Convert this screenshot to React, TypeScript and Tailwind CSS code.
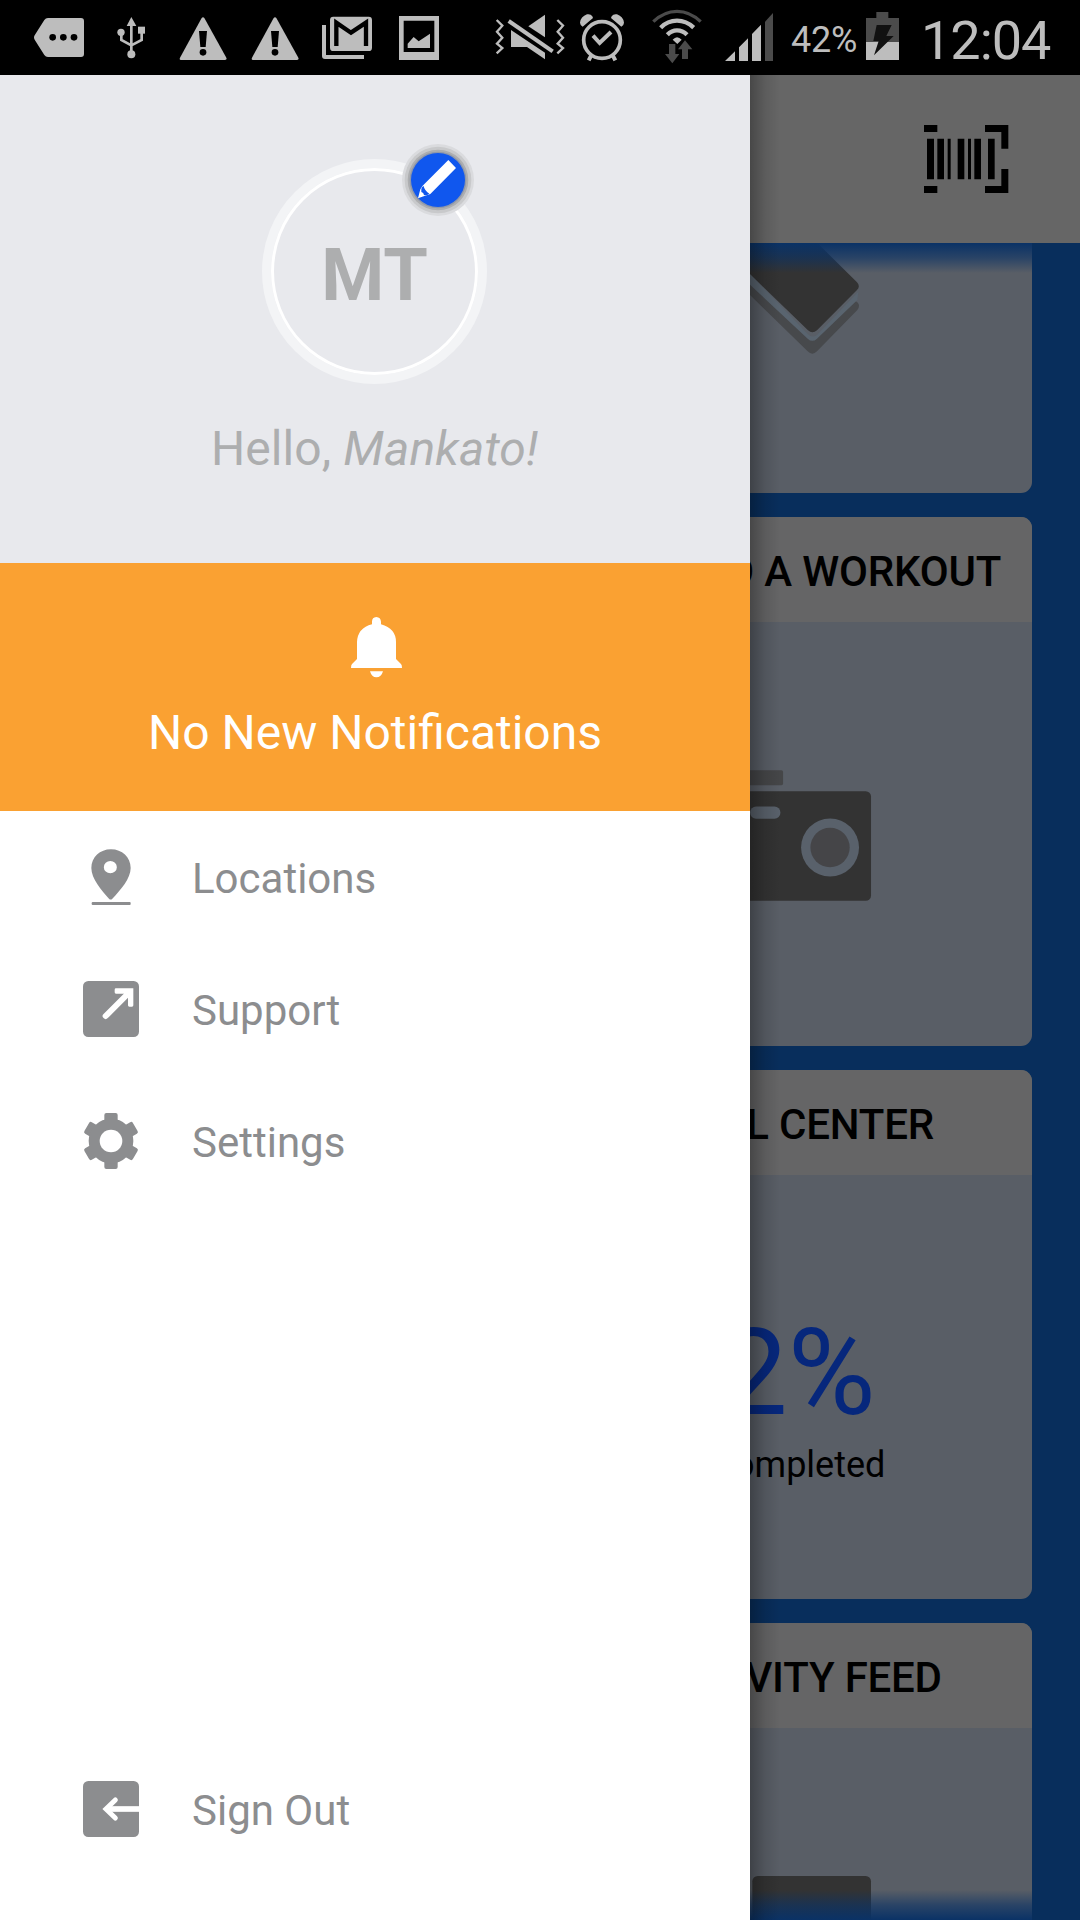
import { clsx } from 'clsx';

interface IconProps {
  className?: string;
}

function MoreIcon({ className }: IconProps) {
  return (
    <svg viewBox="102 0 150 225" className={className} fill="currentColor">
      <path d="M144 54H243Q252 54 252 63V162Q252 171 243 171H144Q137 171 133 165L104 119Q100 112 104 106L133 60Q137 54 144 54Z" />
      <g className="fill-black">
        <circle cx="158" cy="112" r="10" />
        <circle cx="190" cy="112" r="10" />
        <circle cx="222" cy="112" r="10" />
      </g>
    </svg>
  );
}

function UsbIcon({ className }: IconProps) {
  return (
    <svg viewBox="351 0 87 225" className={className} fill="currentColor">
      <path d="M394 51L409 78H380Z" />
      <circle cx="363" cy="97" r="11" />
      <circle cx="394" cy="163" r="12" />
      <path d="M414 80H435V101H414Z" />
      <path d="M394 70V160M364 97V120L394 136M425 98V120L394 136" fill="none" stroke="currentColor" strokeWidth="8" />
    </svg>
  );
}

function WarningIcon({ className }: IconProps) {
  return (
    <svg viewBox="537 0 144 225" className={className} fill="currentColor">
      <path d="M605 54Q609 49 613 54L679 173Q682 180 675 180H543Q537 180 540 173Z" />
      <path d="M597 93H621L617 141H601Z" className="fill-black" />
      <circle cx="609" cy="157" r="10" className="fill-black" />
    </svg>
  );
}

function MailIcon({ className }: IconProps) {
  return (
    <svg viewBox="963 0 156 225" className={className} fill="currentColor">
      <path d="M966 75H978V165H1092V177H975Q966 177 966 168Z" />
      <rect x="990" y="50" width="126" height="103" rx="10" />
      <path d="M1009 138V68L1053 98L1098 68V138" fill="none" stroke="black" strokeWidth="13" />
    </svg>
  );
}

function PictureIcon({ className }: IconProps) {
  return (
    <svg viewBox="1197 0 120 225" className={className} fill="currentColor">
      <path fillRule="evenodd" d="M1197 48H1317V180H1197ZM1211 62V156H1303V62Z" />
      <path d="M1223 144V131L1241 111L1256 124L1290 101V144Z" />
    </svg>
  );
}

function MuteIcon({ className }: IconProps) {
  return (
    <svg viewBox="105 0 210 225" className={className} fill="currentColor">
      <path d="M110 60L127 77L111 95L127 113L111 131L127 144L110 160M292 60L309 77L293 95L309 113L293 131L309 144L292 160" fill="none" stroke="currentColor" strokeWidth="7" />
      <path d="M255 44V112L205 79Z" />
      <path d="M153 90L255 158V178L201 141H153Z" />
      <path d="M146 63L278 154" stroke="currentColor" strokeWidth="12" />
    </svg>
  );
}

function AlarmIcon({ className }: IconProps) {
  return (
    <svg viewBox="357 0 138 225" className={className} fill="none" stroke="currentColor">
      <circle cx="426" cy="120" r="55" strokeWidth="11" />
      <path d="M399 107L419 129L453 96" strokeWidth="12" />
      <path d="M395 164L386 181M457 164L466 181" strokeWidth="12" />
      <path d="M360 68Q362 50 381 43Q392 41 397 49L399 54L368 80Q361 78 360 68ZM492 68Q490 50 471 43Q460 41 455 49L453 54L484 80Q491 78 492 68Z" fill="currentColor" stroke="none" />
    </svg>
  );
}

function WifiIcon({ className }: IconProps) {
  return (
    <svg viewBox="576 0 150 225" className={className} fill="none" stroke="currentColor" strokeWidth="13">
      <path d="M580 65Q612 34 651 34Q690 34 722 65" className="stroke-[#4b4b4b]" strokeWidth="10" />
      <path d="M602 83Q623 62 651 62Q679 62 701 83" />
      <path d="M622 104Q635 91 651 91Q668 91 681 104" />
      <path d="M638 119Q651 104 665 119L652 132Z" fill="currentColor" stroke="none" />
      <path d="M627 132H646V162H658L637 190L615 162H627ZM675 121L697 148H684V177H666V148H654Z" className="fill-[#4b4b4b]" stroke="none" />
    </svg>
  );
}

function SignalIcon({ className }: IconProps) {
  return (
    <svg viewBox="795 0 147 225" className={className} fill="currentColor">
      <path d="M795 183L825 154V183ZM837 142L864 115V183H837ZM876 102L903 74V183H876Z" />
      <path d="M915 65L939 39V183H915Z" className="fill-[#4b4b4b]" />
    </svg>
  );
}

function BatteryIcon({ className }: IconProps) {
  return (
    <svg viewBox="318 0 99 225" className={className}>
      <path d="M349 36H385V54H417V126H318V54H349Z" className="fill-[#4b4b4b]" />
      <path d="M318 126H417V180H318Z" fill="currentColor" />
      <path d="M350 75H395L379 108H401L342 166L356 123H340Z" className="fill-[#111]" />
    </svg>
  );
}

function StatusBar() {
  return (
    <header className="flex h-[75px] w-full shrink-0 items-center bg-black text-[#bdbdbd]">
      <MoreIcon className="ml-[34px] h-[75px] w-[50px] shrink-0" />
      <UsbIcon className="ml-[33px] h-[75px] w-[29px] shrink-0" />
      <WarningIcon className="ml-[33px] h-[75px] w-[48px] shrink-0" />
      <WarningIcon className="ml-[24px] h-[75px] w-[48px] shrink-0" />
      <MailIcon className="ml-[22px] h-[75px] w-[52px] shrink-0" />
      <PictureIcon className="ml-[26px] h-[75px] w-[40px] shrink-0" />
      <MuteIcon className="ml-[56px] h-[75px] w-[70px] shrink-0" />
      <AlarmIcon className="ml-[14px] h-[75px] w-[46px] shrink-0" />
      <WifiIcon className="ml-[27px] h-[75px] w-[50px] shrink-0" />
      <SignalIcon className="ml-[23px] h-[75px] w-[49px] shrink-0" />
      <span className="ml-[17px] w-[75px] pt-[5px] text-[36px] leading-none tracking-[-0.2px] whitespace-nowrap">42%</span>
      <BatteryIcon className="h-[75px] w-[33px] shrink-0" />
      <span className="ml-[22px] pt-[7px] text-[54px] leading-none tracking-[-1px] whitespace-nowrap">12:04</span>
    </header>
  );
}

function BarcodeIcon({ className }: IconProps) {
  return (
    <svg viewBox="552 165 255 204" className={className}>
      <path d="M552 165H592V186H552ZM552 348H592V369H552ZM735 165H805V236H784V186H735ZM784 297H805V369H735V348H784Z" />
      <path d="M561 206H582V328H561ZM592 206H612V328H592ZM623 206H632V328H623ZM653 206H673V328H653ZM684 206H693V328H684ZM703 206H723V328H703ZM744 206H764V328H744Z" />
    </svg>
  );
}

function PinIcon() {
  return (
    <svg viewBox="69 56 168 168" className="size-[56px]" fill="currentColor">
      <path fillRule="evenodd" d="M153 57C186 57 212 81 212 113C212 145 181 180 157 205Q152 210 147 205C125 181 94 145 94 113C94 81 120 57 153 57ZM151 92A19 18 0 1 0 151 129A19 18 0 1 0 151 92Z" />
      <rect x="95" y="215" width="117" height="9" rx="3" />
    </svg>
  );
}

function ExternalIcon() {
  return (
    <svg viewBox="69 453 168 168" className="size-[56px]">
      <rect x="69" y="453" width="168" height="168" rx="16" fill="currentColor" />
      <path d="M137 558L206 489" stroke="white" strokeWidth="18" strokeLinecap="round" />
      <path d="M168 475H220V526Q220 530 216 530H208Q204 530 204 526V503L192 491H168Q164 491 164 487V479Q164 475 168 475Z" fill="white" />
    </svg>
  );
}

function GearIcon() {
  return (
    <svg viewBox="69 849 168 168" className="size-[56px]" fill="currentColor">
      {[0, 60, 120].map((angle) => (
        <rect key={angle} x="133" y="849" width="40" height="168" rx="6" transform={`rotate(${angle} 153 933)`} />
      ))}
      <circle cx="153" cy="933" r="67" />
      <circle cx="153" cy="933" r="34" fill="white" />
    </svg>
  );
}

function SignOutIcon() {
  return (
    <svg viewBox="69 63 168 168" className="size-[56px]">
      <rect x="69" y="63" width="168" height="168" rx="16" fill="currentColor" />
      <path d="M146 147H237" stroke="white" strokeWidth="17" />
      <path d="M166 120L138 147L166 174" fill="none" stroke="white" strokeWidth="15" strokeLinecap="round" />
    </svg>
  );
}

function BellIcon() {
  return (
    <svg viewBox="633 200 153 183" className="ml-[3px] h-[61px] w-[51px]" fill="white">
      <path d="M709 200Q722 201 723 214V222Q768 235 768 275V326L783 341Q786 344 786 353H633Q633 344 636 341L651 326V275Q653 233 696 222V214Q696 201 709 200ZM690 363H729Q724 381 709 381Q695 381 690 363Z" />
    </svg>
  );
}

function EditBadge() {
  return (
    <svg viewBox="486 42 216 216" className="absolute -top-[24px] left-[131px] size-[72px]">
      <circle cx="594" cy="150" r="108" className="fill-[#dadbde]" />
      <circle cx="594" cy="150" r="100" className="fill-[#c8c9cb]" />
      <circle cx="594" cy="150" r="91" className="fill-[#adaeb0]" />
      <circle cx="594" cy="150" r="85" className="fill-[#8f98aa]" />
      <circle cx="594" cy="150" r="81" className="fill-[#1057ee]" />
      <path d="M625 90L648 114L571 192L551 199L534 205L541 178L548 167Z" fill="white" />
      <path d="M544 177Q546 170 551 168Q553 181 568 191Q559 197 552 195Q551 187 544 186Z" className="fill-[#1057ee]" />
    </svg>
  );
}

interface MenuItemProps {
  icon: React.ReactNode;
  label: string;
  className?: string;
}

function MenuItem({ icon, label, className }: MenuItemProps) {
  return (
    <li className={clsx('flex h-[132px] items-center pl-[83px] text-[#8c8d8f]', className)}>
      {icon}
      <span className="ml-[53px] pt-[4px] text-[42px] leading-none">{label}</span>
    </li>
  );
}

function Drawer() {
  return (
    <aside className="flex w-[750px] shrink-0 flex-col bg-white">
      <section className="flex h-[488px] flex-col items-center bg-[#e8e9ed] pt-[84px] pr-px text-[#adaeaf]">
        <div className="relative flex size-[225px] items-center justify-center rounded-full border-[9px] border-[#f3f4f6]">
          <div className="flex size-[207px] shrink-0 items-center justify-center rounded-full border-[3px] border-white">
            <span className="pt-[9px] text-[72px] leading-none font-bold">MT</span>
          </div>
          <EditBadge />
        </div>
        <p className="mt-[41px] text-[48px] leading-none tracking-[0.1px]">
          Hello, <em>Mankato!</em>
        </p>
      </section>
      <section className="flex h-[248px] flex-col items-center bg-[#faa132] pt-[54px] text-white">
        <BellIcon />
        <p className="mt-[31px] text-[48px] leading-none">No New Notifications</p>
      </section>
      <ul className="flex grow flex-col pb-[45px]">
        <MenuItem icon={<PinIcon />} label="Locations" />
        <MenuItem icon={<ExternalIcon />} label="Support" />
        <MenuItem icon={<GearIcon />} label="Settings" />
        <MenuItem icon={<SignOutIcon />} label="Sign Out" className="mt-auto" />
      </ul>
    </aside>
  );
}

interface CardProps {
  title: string;
  children: React.ReactNode;
}

function Card({ title, children }: CardProps) {
  return (
    <article className="flex h-[529px] shrink-0 flex-col overflow-hidden rounded-[11px] bg-[#595e66]">
      <h2 className="flex h-[105px] shrink-0 items-center justify-center bg-[#656566] pt-[5px] text-[42px] leading-none font-medium tracking-[-0.2px] whitespace-nowrap">
        {title}
      </h2>
      {children}
    </article>
  );
}

function Dashboard() {
  return (
    <main className="relative flex w-[330px] flex-col overflow-hidden bg-[#082e5c]">
      <div className="flex h-[168px] shrink-0 items-center justify-end bg-[#666] pr-[71px]">
        <BarcodeIcon className="h-[68px] w-[85px]" />
      </div>
      {/* cards start underneath the drawer */}
      <div className="-ml-[186px] flex h-[1677px] w-[468px] flex-col gap-[24px] overflow-hidden">
        <article className="flex h-[250px] shrink-0 justify-end overflow-hidden rounded-b-[11px] bg-[#595e66]">
          <svg viewBox="30 519 846 750" className="h-[250px] w-[282px]">
            <path d="M0 610L204 804Q217 818 231 804L342 695Q350 691 356 702Q359 712 352 720L231 844Q217 858 203 844L0 646Z" className="fill-[#47494c]" />
            <path d="M0 580L203 792Q217 806 231 795L355 665L352 690L231 806Q217 819 203 806L0 616Z" className="fill-[#59646f]" />
            <path d="M0 519H232L351 637Q362 649 351 660L231 781Q217 793 204 781L0 583Z" className="fill-[#333]" />
          </svg>
        </article>
        <Card title="RECORD A WORKOUT">
          <svg viewBox="30 456 846 1270" className="ml-[186px] h-[423px] w-[282px]">
            <rect x="-20" y="901" width="149" height="45" rx="5" className="fill-[#454648]" />
            <rect x="-120" y="964" width="513" height="329" rx="16" className="fill-[#333]" />
            <rect x="30" y="1010" width="91" height="37" rx="18" className="fill-[#59616b]" />
            <circle cx="270" cy="1133" r="87" className="fill-[#59616b]" />
            <circle cx="270" cy="1133" r="59" className="fill-[#454548]" />
          </svg>
        </Card>
        <Card title="GOAL CENTER">
          <div className="flex flex-col items-center pt-[138px]">
            <span className="text-[120px] leading-none text-[#06277c]">2%</span>
            <span className="mt-[14px] text-[36px] leading-none">Completed</span>
          </div>
        </Card>
        <Card title="ACTIVITY FEED">
          <svg viewBox="30 444 846 576" className="ml-[186px] h-[192px] w-[282px]">
            <rect x="37" y="888" width="356" height="200" rx="16" className="fill-[#333]" />
          </svg>
        </Card>
      </div>
      <div className="absolute top-[168px] right-[48px] left-0 h-[30px] bg-linear-to-b from-[#0a3266] via-[#0a3266]/60 to-transparent" />
      <div className="absolute right-[48px] bottom-0 left-0 h-[30px] bg-linear-to-t from-[#0a3266] via-[#0a3266]/60 to-transparent" />
      <div className="absolute inset-y-0 left-0 w-[30px] bg-linear-to-r from-black/30 via-black/10 to-transparent" />
    </main>
  );
}

export default function App() {
  return (
    <div className="flex h-[1920px] w-[1080px] flex-col overflow-hidden font-[Roboto,sans-serif]">
      <StatusBar />
      <div className="flex h-[1845px]">
        <Drawer />
        <Dashboard />
      </div>
    </div>
  );
}
